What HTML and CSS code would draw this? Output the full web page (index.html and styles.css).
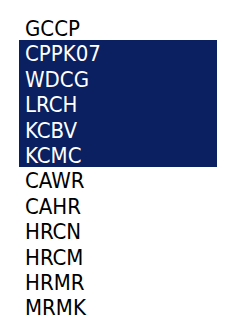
FILE: index.html
```html
<!DOCTYPE html>
<html>
<head>
<meta charset="utf-8">
<link rel="stylesheet" href="styles.css">
</head>
<body>
<ul class="list">
  <li class="item">GCCP</li>
  <li class="item selected">CPPK07</li>
  <li class="item selected">WDCG</li>
  <li class="item selected">LRCH</li>
  <li class="item selected">KCBV</li>
  <li class="item selected">KCMC</li>
  <li class="item">CAWR</li>
  <li class="item">CAHR</li>
  <li class="item">HRCN</li>
  <li class="item">HRCM</li>
  <li class="item">HRMR</li>
  <li class="item">MRMK</li>
</ul>
</body>
</html>
```
FILE: styles.css
```css
html, body {
  margin: 0;
  padding: 0;
  background: #ffffff;
}
.list {
  list-style: none;
  margin: 0 0 0 19px;
  padding: 15px 0 0 0;
  width: 198px;
  font-family: "DejaVu Sans Condensed", "DejaVu Sans", sans-serif;
  font-stretch: condensed;
  font-size: 22px;
}
.item {
  height: 25.4px;
  line-height: 27px;
  padding-left: 6px;
  color: #000000;
  white-space: nowrap;
  overflow: hidden;
}
.item.selected {
  background: #0a2060;
  color: #ffffff;
}
```
